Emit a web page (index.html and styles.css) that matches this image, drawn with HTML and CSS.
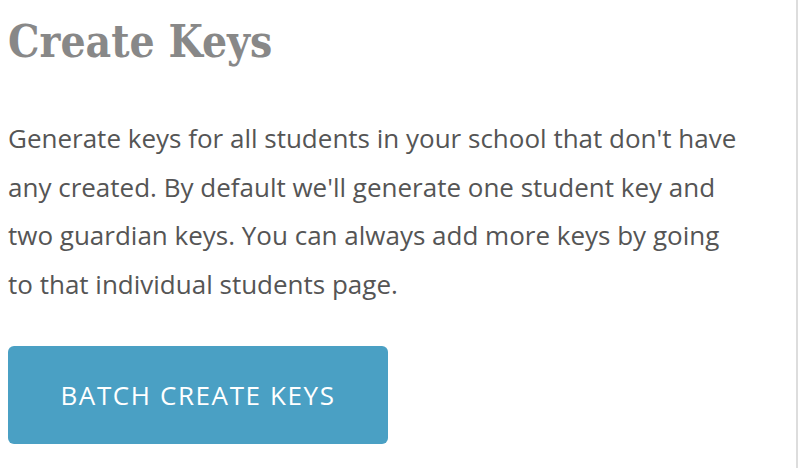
FILE: index.html
```html
<!DOCTYPE html>
<html lang="en">
<head>
  <meta charset="UTF-8" />
  <title>Create Keys</title>
  <meta name="viewport" content="width=device-width, initial-scale=1.0" />
  <link rel="stylesheet" href="styles.css">
</head>
<body>
  <div class="panel">
    <h2>Create Keys</h2>
    <p class="intro">
      Generate keys for all students in your school that don't have
      any created. By default we'll generate one student key and
      two guardian keys. You can always add more keys by going
      to that individual students page.
    </p>
    <button type="button" class="batch-btn">Batch Create Keys</button>
  </div>
</body>
</html>
```

FILE: styles.css
```css
html, body {
  margin: 0;
  height: 100%;
}
body {
  background: #fff;
  font-family: 'Open Sans', sans-serif;
}
.panel {
  box-sizing: border-box;
  width: 798px;
  height: 100%;
  padding: 12px 0 0 8px;
  border-right: 2px solid #dddddd;
}
.panel h2 {
  margin: 0;
  font-family: 'DejaVu Serif', serif;
  font-stretch: condensed;
  font-weight: bold;
  font-size: 44px;
  line-height: 60px;
  color: #888888;
}
.intro {
  margin: 42px 0 0;
  width: 740px;
  font-size: 26px;
  line-height: 48.5px;
  color: #555555;
}
.batch-btn {
  margin-top: 38px;
  width: 380px;
  height: 98px;
  background-color: #4aa0c4;
  color: #fff;
  border: none;
  border-radius: 6px;
  font-family: 'Open Sans', sans-serif;
  font-size: 26px;
  letter-spacing: 1.6px;
  text-transform: uppercase;
  cursor: pointer;
}
```
